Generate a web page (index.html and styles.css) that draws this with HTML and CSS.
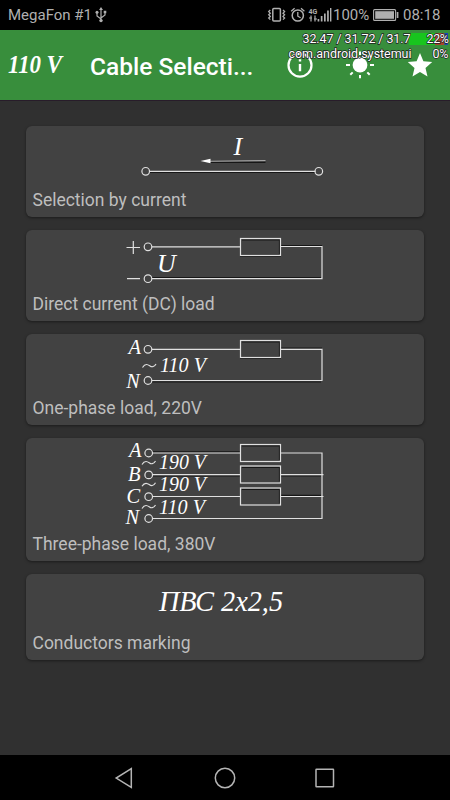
FILE: index.html
```
<!DOCTYPE html>
<html lang="en">
<head>
    <meta charset="UTF-8">
    <meta name="viewport" content="width=device-width, initial-scale=1.0">
    <title>Cable Selection</title>
    <link rel="stylesheet" href="styles.css">
</head>
<body>
    <div class="status-bar">
        <span class="carrier">MegaFon #1</span>
        <svg class="usb" width="12" height="16" viewBox="0 0 12 16">
            <path d="M6 2v12M2 5v4l4 3M10 5v3l-4 3" fill="none" stroke="#b0b0b0" stroke-width="1.2"/>
            <path d="M6 0l2 3H4zM8.7 3.7h2.6v2.6H8.7z"/>
            <circle cx="2" cy="5.3" r="1.5"/>
            <circle cx="6" cy="13.6" r="1.7"/>
        </svg>
        <svg class="status-icons" width="66" height="30" viewBox="267 0 66 30">
            <g fill="none" stroke="#b0b0b0" stroke-width="1.5">
                <rect x="272.8" y="8.500" width="7.6" height="12.4" rx="1"/>
                <path d="M270.3 10l-1.6 1.6 1.6 1.6-1.6 1.6 1.6 1.6-1.6 1.6 1.6 1.6M283 10l1.6 1.6-1.6 1.6 1.6 1.6-1.6 1.6 1.6 1.6-1.6 1.6" stroke-width="1.3"/>
                <circle cx="297.8" cy="15.5" r="5.6"/>
                <path d="M297.8 12v4.2l2.8 1.6M291.2 11.200l3.4-2.9M304.400 11.200l-3.4-2.9" stroke-width="1.3"/>
                <path d="M311 15.5v6M315 15.5v6M309 18h3M314 19h3" stroke-width="1.2"/>
            </g>
            <text x="308.500" y="13.500" class="net">4G</text>
            <path d="M317.6 19h1.7v2.5h-1.7zM320.8 16h1.7v5.5h-1.7zM324 13.5h1.7v8H324zM327.1 10.5h1.7v11h-1.7zM330 8h1.4v13.5H330z"/>
        </svg>
        <span class="percent">100%</span>
        <svg class="battery" width="26" height="12" viewBox="0 0 26 12">
            <rect x="0.6" y="0.6" width="22" height="10.8" rx="1" fill="none" stroke="#b0b0b0" stroke-width="1.1"/>
            <rect x="2.2" y="2.2" width="18.8" height="7.6"/>
            <rect x="23.7" y="3" width="1.7" height="6"/>
        </svg>
        <span class="clock">08:18</span>
    </div>

    <div class="app-bar">
        <svg class="voltage" width="64" height="40" viewBox="0 45 64 40">
            <text x="8" y="73" textLength="33" lengthAdjust="spacingAndGlyphs">110</text>
            <text x="46.500" y="73" textLength="15.500" lengthAdjust="spacingAndGlyphs">V</text>
        </svg>
        <h1 class="title">Cable Selecti...</h1>
        <svg class="actions" width="165" height="40" viewBox="285 45 165 40">
            <circle cx="300" cy="65.2" r="11.5" fill="none" stroke="#fff" stroke-width="2.2"/>
            <path d="M298.8 59.3h2.4v2.3h-2.4zM298.8 64h2.4v7.2h-2.4z"/>
            <circle cx="360" cy="65" r="7.4"/>
            <path d="M360 51.5v3.5M360 75v3.3M346 65h4M370 65h4M350.3 55.2l2.4 2.4M367.3 72.4l2.4 2.4M369.7 55.2l-2.4 2.4M352.7 72.4l-2.4 2.4" stroke="#fff" stroke-width="2"/>
            <path d="M420 52.9l3.4 8.3 8.8.8-6.700 5.900 2 8.700-7.500-4.600-7.500 4.600 2-8.700-6.700-5.900 8.800-.8z"/>
        </svg>
        <!-- cpu load, drawn over the bar -->
        <svg class="cpu" width="170" height="34" viewBox="280 30 170 34">
            <rect x="409" y="33" width="26" height="12" fill="#18c51e"/>
            <rect x="435" y="33" width="9.5" height="12" fill="#a8442a"/>
            <rect x="444.5" y="33" width="3.5" height="12" fill="#1746b8"/>
            <text x="302.5" y="43.3" textLength="108">32.47 / 31.72 / 31.7</text>
            <text x="426.5" y="43.3" textLength="22.5">22%</text>
            <text x="288.5" y="57.8" textLength="123">com.android.systemui</text>
            <text x="432.5" y="57.8" textLength="16">0%</text>
        </svg>
    </div>

    <div class="content">
        <div class="card">
            <svg class="scheme" width="398" height="62" viewBox="26 126 398 62">
                <path class="shadow" d="M149.500 172.500h166M210 162.500h55.500"/>
                <path class="wire" d="M149.500 171.300h166"/>
                <path class="wire thin" d="M208 161.300l57.500-.8"/>
                <path class="fill" d="M200.500 161l10-2.300v4.600z"/>
                <circle cx="145.700" cy="171.300" r="3.800"/>
                <circle cx="318.800" cy="171.300" r="3.800"/>
                <text x="233.500" y="154.500" font-size="26">I</text>
            </svg>
            <div class="label">Selection by current</div>
        </div>

        <div class="card">
            <svg class="scheme" width="398" height="62" viewBox="26 230 398 62">
                <path class="shadow" d="M281 245.500h41M152 277.500h169M242 240h37.500v14M240 256.500h41"/>
                <path class="wire" d="M152 246.800h88M281 246.500h41v32.200H152"/>
                <rect x="240.500" y="238.500" width="40" height="17"/>
                <path class="wire" d="M126.500 247.500h13.500M133.300 241v13M127 278.700h13"/>
                <circle cx="148" cy="246.800" r="3.800"/>
                <circle cx="148" cy="278.700" r="3.800"/>
                <text x="157" y="271.700" font-size="26">U</text>
            </svg>
            <div class="label">Direct current (DC) load</div>
        </div>

        <div class="card">
            <svg class="scheme" width="398" height="62" viewBox="26 334 398 62">
                <path class="shadow" d="M281 348h41M152 382h169M242 342h37.500v14M240 358.500h41"/>
                <path class="wire" d="M152 349.300h88M281 349.300h41v31.200H152"/>
                <rect x="240.500" y="340.500" width="40" height="17"/>
                <circle cx="148" cy="349.300" r="3.800"/>
                <circle cx="148" cy="380.500" r="3.800"/>
                <text x="128.500" y="353.500" textLength="12.500" lengthAdjust="spacingAndGlyphs">A</text>
                <text x="126.300" y="388" textLength="13.500" lengthAdjust="spacingAndGlyphs">N</text>
                <path class="wire" d="M142.500 367.500c3-5 6-2.500 7.500-1.500s4 1.500 6-2"/>
                <text x="160" y="372.300" textLength="46" lengthAdjust="spacingAndGlyphs">110 V</text>
            </svg>
            <div class="label">One-phase load, 220V</div>
        </div>

        <div class="card three-phase">
            <svg class="scheme" width="398" height="94" viewBox="26 438 398 94">
                <path class="shadow" d="M152 451.800h88M152 476h88M281 476h40M281 495.300h40M242 446h37.500v14M242 467.500h37.500v14M242 489.500h37.500v14"/>
                <path class="wire" d="M152 453h88M281 453h41v65.500H152M152 474.700h88M281 474.700h42.500M152 496.500h88M281 496.500h42.500"/>
                <rect x="240.500" y="444.500" width="40" height="17"/>
                <rect x="240.500" y="466" width="40" height="17"/>
                <rect x="240.500" y="488" width="40" height="17"/>
                <circle cx="148.700" cy="453" r="3.800"/>
                <circle cx="148.700" cy="474.900" r="3.800"/>
                <circle cx="148.700" cy="496.700" r="3.800"/>
                <circle cx="148.700" cy="518.500" r="3.800"/>
                <text x="129" y="457.300">A</text>
                <text x="128" y="481">B</text>
                <text x="126.500" y="503">C</text>
                <text x="125.500" y="524.300">N</text>
                <path class="wire" d="M142 464.500c3-5 6-2.500 7.500-1.500s4 1.500 6-2M142 486.300c3-5 6-2.500 7.500-1.500s4 1.500 6-2M142 508.500c3-5 6-2.500 7.500-1.500s4 1.500 6-2"/>
                <text x="159" y="469.300" textLength="47" lengthAdjust="spacingAndGlyphs">190 V</text>
                <text x="159" y="491" textLength="47" lengthAdjust="spacingAndGlyphs">190 V</text>
                <text x="159" y="513.500" textLength="46" lengthAdjust="spacingAndGlyphs">110 V</text>
            </svg>
            <div class="label">Three-phase load, 380V</div>
        </div>

        <div class="card marking">
            <svg class="scheme" width="398" height="57" viewBox="26 574 398 57">
                <text x="159" y="611" font-size="30" textLength="124" lengthAdjust="spacingAndGlyphs">ПВС 2x2,5</text>
            </svg>
            <div class="label">Conductors marking</div>
        </div>
    </div>

    <div class="nav-bar">
        <svg width="22" height="22" viewBox="0 0 22 22"><path d="M17.300 1.700v18.800L2.200 11.100z"/></svg>
        <svg width="22" height="22" viewBox="0 0 22 22"><circle cx="11" cy="11" r="9.700"/></svg>
        <svg width="22" height="22" viewBox="0 0 22 22"><rect x="2" y="2.200" width="17.500" height="17.500" rx="0.500"/></svg>
    </div>
</body>
</html>
```
FILE: styles.css
```
* {
    box-sizing: border-box;
}
body {
    margin: 0;
    width: 450px;
    height: 800px;
    display: flex;
    flex-direction: column;
    overflow: hidden;
    background: #303030;
    font-family: Roboto, "Liberation Sans", sans-serif;
}
svg {
    display: block;
    flex: none;
}
.status-bar {
    height: 30px;
    flex: none;
    display: flex;
    align-items: center;
    padding: 0 9px 0 8px;
    background: #000;
    color: #b0b0b0;
    fill: #b0b0b0;
    font-size: 15px;
    white-space: nowrap;
}
.carrier {
    width: 87px;
}
.status-icons {
    margin-left: 160px;
}
.net {
    font-size: 7px;
    font-weight: bold;
}
.percent {
    width: 40px;
}
.battery {
    margin-right: 4px;
}
.clock {
    font-size: 15px;
}
.app-bar {
    position: relative;
    height: 70px;
    flex: none;
    display: flex;
    align-items: center;
    background: #388e3c;
    box-shadow: 0 1px 0 #281c2a;
    fill: #fff;
}
.voltage text {
    font: italic bold 25px "Liberation Serif", serif;
}
.title {
    width: 195px;
    margin: 2px 0 0 26px;
    color: #fff;
    font-size: 24.500px;
    font-weight: 500;
    white-space: nowrap;
}
.cpu {
    position: absolute;
    top: 0;
    right: 0;
    font-size: 12.500px;
}
.cpu text {
    stroke: #222;
    stroke-width: 1.400px;
    paint-order: stroke;
}
.content {
    flex: 1;
    display: flex;
    flex-direction: column;
    gap: 13px;
    padding: 26px;
}
.card {
    height: 91px;
    flex: none;
    border-radius: 6px;
    background: #424242;
    box-shadow: 0 1px 3px rgba(0, 0, 0, 0.45);
}
.three-phase {
    height: 123px;
}
.marking {
    height: 86px;
}
.label {
    padding-left: 6.500px;
    color: #bebebe;
    font-size: 17.500px;
    line-height: 25px;
}
.scheme text {
    fill: #fff;
    font-family: "Liberation Serif", serif;
    font-style: italic;
}
.scheme text:not([font-size]) {
    font-size: 20.500px;
}
.scheme path, .scheme circle, .scheme rect {
    fill: none;
    stroke: #e0e0e0;
    stroke-width: 1.200px;
}
.scheme .shadow {
    stroke: #161616;
}
.scheme .thin {
    stroke: #a8a8a8;
    stroke-width: 1px;
}
.scheme .fill {
    fill: #fff;
    stroke: none;
}
.nav-bar {
    height: 45px;
    flex: none;
    display: flex;
    justify-content: center;
    align-items: center;
    gap: 78px;
    background: #000;
}
.nav-bar svg {
    fill: none;
    stroke: #b4b4b4;
    stroke-width: 1.500px;
}
```
